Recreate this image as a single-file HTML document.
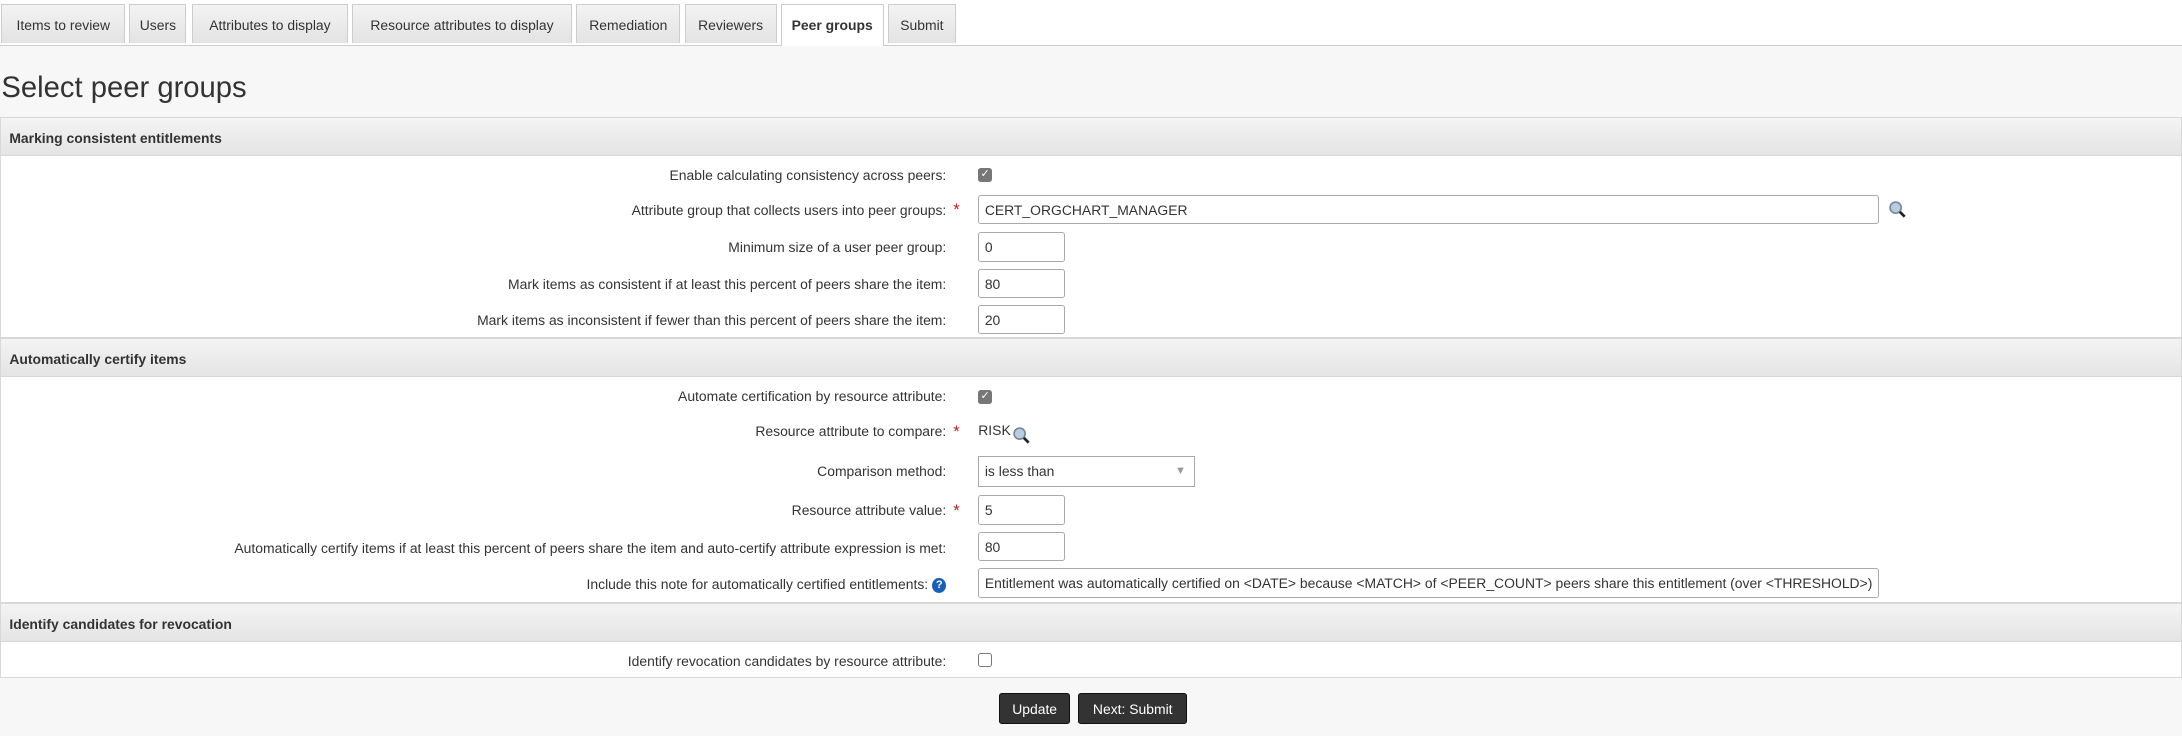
<!DOCTYPE html>
<html><head><meta charset="utf-8">
<style>
html,body{margin:0;padding:0;}
body{width:1568px;height:529px;zoom:1.39158;background:#f7f7f7;font-family:"Liberation Sans",sans-serif;font-size:10px;color:#333;overflow:hidden;position:relative}
.abs{position:absolute}
.tabs{position:absolute;left:0;top:0;width:1568px;height:32px;background:#fff;border-bottom:1px solid #ccc}
.tab{position:absolute;top:3px;height:28px;line-height:29px;border:1px solid #ccc;border-bottom:none;background:linear-gradient(#f3f3f3,#e3e3e3);text-align:center;box-sizing:border-box;font-size:10px;color:#333}
.tab.act{background:#fff;height:30px;font-weight:bold}
h1{position:absolute;left:1px;top:52px;margin:0;font-weight:normal;font-size:21px;color:#333}
.sh{position:absolute;left:0;height:28px;border:1px solid #d8d8d8;background:linear-gradient(#f4f4f4,#e4e4e4);line-height:29px;padding-left:6px;box-sizing:border-box;width:1568px;font-weight:bold;font-size:10px}
.sb{position:absolute;left:0;width:1568px;background:#fff;border:1px solid #d8d8d8;border-top:none;box-sizing:border-box}
.lbl{position:absolute;right:888px;white-space:nowrap;text-align:right}
.star{position:absolute;left:685px;color:#b22;font-size:12px}
.inp{position:absolute;left:703px;height:21px;border:1px solid #aaa;background:#fff;box-sizing:border-box;padding-left:4px;line-height:21px;white-space:nowrap;overflow:hidden;border-radius:2px}
.cb{position:absolute;left:703px;width:10px;height:10px;box-sizing:border-box;border-radius:2px}
.cb.on{background:#777;color:#fff;font-size:8px;line-height:10px;text-align:center}
.cb.off{border:1px solid #777;background:#fff}
.btn{position:absolute;top:498px;height:22px;background:#333;color:#fff;line-height:22px;text-align:center;border-radius:2px;font-size:10px;border:1px solid #111;box-sizing:border-box}
</style></head><body>
<div class="tabs">
<div class="tab" style="left:1px;width:89px">Items to review</div>
<div class="tab" style="left:93px;width:41px">Users</div>
<div class="tab" style="left:138px;width:112px">Attributes to display</div>
<div class="tab" style="left:253px;width:158px">Resource attributes to display</div>
<div class="tab" style="left:414px;width:75px">Remediation</div>
<div class="tab" style="left:492px;width:66px">Reviewers</div>
<div class="tab act" style="left:561px;width:74px">Peer groups</div>
<div class="tab" style="left:638px;width:49px">Submit</div>
</div>
<h1>Select peer groups</h1>

<div class="sh" style="top:84px">Marking consistent entitlements</div>
<div class="sb" style="top:112px;height:131px"></div>
<div class="lbl" style="top:120px">Enable calculating consistency across peers:</div>
<div class="cb on" style="top:121px">✓</div>
<div class="lbl" style="top:145px">Attribute group that collects users into peer groups:</div><div class="star" style="top:144px">*</div>
<div class="inp" style="top:140px;width:647px">CERT_ORGCHART_MANAGER</div>
<svg class="abs" style="left:1357px;top:144px" width="14" height="14" viewBox="0 0 14 14"><circle cx="5.5" cy="5.5" r="4" fill="#b8cde0" stroke="#789" stroke-width="1.2"/><path d="M8.5 8.5L12 12" stroke="#222" stroke-width="2"/></svg>
<div class="lbl" style="top:172px">Minimum size of a user peer group:</div>
<div class="inp" style="top:167px;width:62px">0</div>
<div class="lbl" style="top:198px">Mark items as consistent if at least this percent of peers share the item:</div>
<div class="inp" style="top:193px;width:62px">80</div>
<div class="lbl" style="top:224px">Mark items as inconsistent if fewer than this percent of peers share the item:</div>
<div class="inp" style="top:219px;width:62px">20</div>

<div class="sh" style="top:243px">Automatically certify items</div>
<div class="sb" style="top:271px;height:162px"></div>
<div class="lbl" style="top:279px">Automate certification by resource attribute:</div>
<div class="cb on" style="top:280px">✓</div>
<div class="lbl" style="top:304px">Resource attribute to compare:</div><div class="star" style="top:303px">*</div>
<div class="abs" style="left:703px;top:303px">RISK</div>
<svg class="abs" style="left:727px;top:306px" width="14" height="14" viewBox="0 0 14 14"><circle cx="5.5" cy="5.5" r="4" fill="#b8cde0" stroke="#789" stroke-width="1.2"/><path d="M8.5 8.5L12 12" stroke="#222" stroke-width="2"/></svg>
<div class="lbl" style="top:333px">Comparison method:</div>
<div class="inp" style="top:328px;width:156px;height:22px;border-radius:0">is less than<span style="position:absolute;right:6px;top:0;color:#999;font-size:8px">▼</span></div>
<div class="lbl" style="top:361px">Resource attribute value:</div><div class="star" style="top:360px">*</div>
<div class="inp" style="top:356px;width:62px">5</div>
<div class="lbl" style="top:388px">Automatically certify items if at least this percent of peers share the item and auto-certify attribute expression is met:</div>
<div class="inp" style="top:382px;width:62px">80</div>
<div class="lbl" style="top:414px;right:901px">Include this note for automatically certified entitlements:</div>
<div class="abs" style="left:670px;top:415px;width:10px;height:11px;border-radius:50%;background:#1a5fb4;color:#fff;font-size:8px;line-height:11px;text-align:center;font-weight:bold">?</div>
<div class="inp" style="top:408px;width:647px;height:22px">Entitlement was automatically certified on &lt;DATE&gt; because &lt;MATCH&gt; of &lt;PEER_COUNT&gt; peers share this entitlement (over &lt;THRESHOLD&gt;)</div>

<div class="sh" style="top:433px">Identify candidates for revocation</div>
<div class="sb" style="top:461px;height:26px"></div>
<div class="lbl" style="top:469px">Identify revocation candidates by resource attribute:</div>
<div class="cb off" style="top:469px"></div>

<div class="btn" style="left:718px;width:51px">Update</div>
<div class="btn" style="left:775px;width:78px">Next: Submit</div>
</body></html>
